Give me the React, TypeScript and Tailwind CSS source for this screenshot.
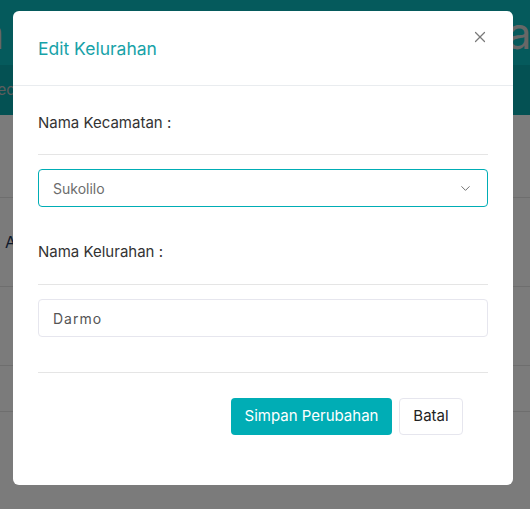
import React from 'react';
import { X, ChevronDown } from 'lucide-react';

export default function App() {
    return (
        <div className="relative h-[509px] w-[530px] overflow-hidden bg-[#f6f6f6] font-['Inter',sans-serif]">
            {/* page behind the modal */}
            <div className="flex h-[65px] items-center justify-center overflow-hidden whitespace-nowrap bg-[#0bb4b8] text-[44px] text-[#cfcfcf]">
                Form Edit Data Kelurahan Surabaya
            </div>
            <div className="flex h-[50px] items-center overflow-hidden whitespace-nowrap bg-[#08a3a7] text-[15px] text-[#bbbbbb]">
                <span className="-ml-[12px]">Kecamatan</span>
            </div>
            <div className="h-[83px] border-b border-[#dddddd]" />
            <div className="flex h-[89px] items-center border-b border-[#dddddd] pl-[5px] text-[16px] text-[#1d3557]">
                Aksi
            </div>
            <div className="h-[79px] border-b border-[#dddddd]" />
            <div className="h-[46px] border-b border-[#dddddd]" />

            {/* modal */}
            <div className="absolute inset-0 flex justify-start bg-black/50 pl-[13px] pt-[11px]">
                <div className="h-[474px] w-[500px] rounded-[6px] bg-white">
                    <div className="flex h-[75px] items-start justify-between border-b border-[#e9ecef] px-[25px]">
                        <h2 className="mt-[27px] text-[17.5px] leading-[22px] text-[#17a2a8]">Edit Kelurahan</h2>
                        <button className="-mr-[1px] mt-[17px] text-[#7a7a7a]">
                            <X size={18} strokeWidth={1.6} />
                        </button>
                    </div>

                    <div className="px-[25px] pt-[27px]">
                        <label className="block text-[15px] leading-[20px] text-[#333333]">Nama Kecamatan :</label>
                        <div className="mt-[21px] border-t border-[#e5e5e5]" />
                        <div className="mt-[14px] flex h-[38px] items-center justify-between rounded-[4px] border border-[#00adb5] pl-[14px] pr-[14px]">
                            <span className="text-[14px] text-[#6c6c6c]">Sukolilo</span>
                            <ChevronDown size={15} strokeWidth={1.5} className="text-[#666666]" />
                        </div>

                        <label className="mt-[35px] block text-[15px] leading-[20px] text-[#333333]">Nama Kelurahan :</label>
                        <div className="mt-[22px] border-t border-[#e5e5e5]" />
                        <div className="mt-[14px] flex h-[38px] items-center rounded-[4px] border border-[#e6e6ee] pl-[14px]">
                            <span className="text-[14px] tracking-[1px] text-[#555555]">Darmo</span>
                        </div>

                        <div className="mt-[35px] border-t border-[#e5e5e5]" />
                        <div className="mt-[25px] flex justify-end gap-[7px] pr-[25px]">
                            <button className="h-[37px] w-[161px] rounded-[4px] bg-[#00adb5] text-[15px] text-white">
                                Simpan Perubahan
                            </button>
                            <button className="h-[37px] w-[64px] rounded-[4px] border border-[#e6e6ee] text-[15px] text-[#222222]">
                                Batal
                            </button>
                        </div>
                    </div>
                </div>
            </div>
        </div>
    );
}
